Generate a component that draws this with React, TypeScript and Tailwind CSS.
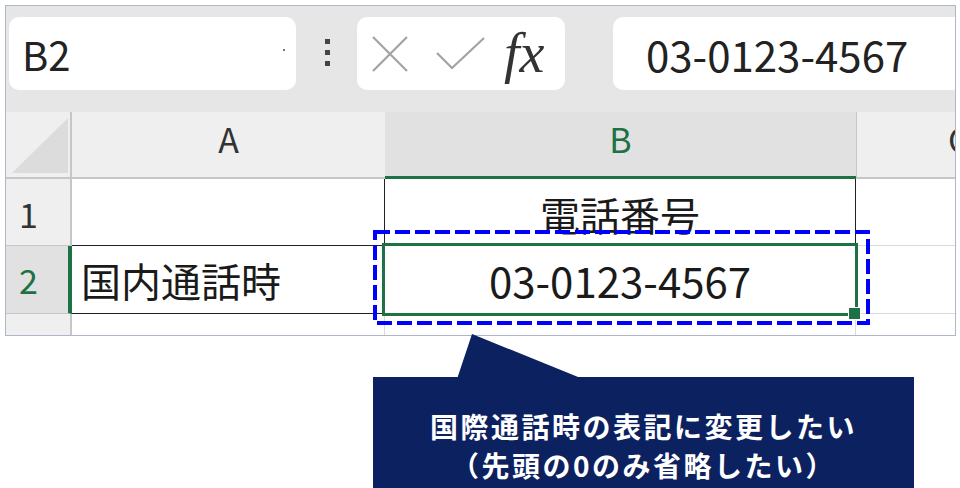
import React from "react";

const GREEN = "#1e7145";

function Toolbar() {
  return (
    <div className="h-[106px] shrink-0 flex items-start pt-[11px] pl-[3px]">
      {/* name box */}
      <div className="relative w-[287px] h-[73px] rounded-[10px] bg-white flex items-center pl-[13px] text-[40px] text-[#222]">
        B2
        <div className="absolute right-[11px] top-[32px] w-[2px] h-[2px] bg-[#777]" />
      </div>

      {/* grip dots */}
      <div className="ml-[29px] mt-[22px] flex flex-col gap-[6px]">
        <div className="w-[5px] h-[5px] bg-[#444]" />
        <div className="w-[5px] h-[5px] bg-[#444]" />
        <div className="w-[5px] h-[5px] bg-[#444]" />
      </div>

      {/* cancel / enter / fx */}
      <div className="ml-[27px] w-[208px] h-[73px] rounded-[10px] bg-white flex items-center pl-[15px]">
        <svg width="36" height="36" viewBox="0 0 36 36">
          <path d="M1 1 L35 35 M35 1 L1 35" stroke="#a3a3a3" strokeWidth="2.2" fill="none" />
        </svg>
        <svg className="ml-[28px]" width="50" height="34" viewBox="0 0 50 34">
          <path d="M1 16 L16 31 L48 1" stroke="#a3a3a3" strokeWidth="2.2" fill="none" />
        </svg>
        <span className="ml-[18px] font-['Liberation_Serif',serif] italic text-[56px] leading-none text-[#333] -mt-[2px]">
          fx
        </span>
      </div>

      {/* formula bar */}
      <div className="ml-[48px] flex-1 h-[73px] rounded-l-[10px] bg-white flex items-center pl-[33px] text-[42px] text-[#222]">
        03-0123-4567
      </div>
    </div>
  );
}

function Sheet() {
  return (
    <div className="relative flex-1 grid grid-cols-[66px_313px_471px_1fr] grid-rows-[67px_67px_68px_1fr] bg-white overflow-hidden">
      {/* header row */}
      <div className="relative bg-[#efefef] border-r-2 border-b-2 border-[#c6c6c6]">
        <svg className="absolute left-[6px] top-[6px]" width="56" height="55" viewBox="0 0 56 55">
          <polygon points="56,0 56,55 0,55" fill="#dcdcdc" />
        </svg>
      </div>
      <div className="bg-[#efefef] border-b-2 border-[#c6c6c6] flex items-start justify-center pt-[7px] text-[34px] leading-[40px] text-[#333]">
        A
      </div>
      <div className="bg-[#e1e1e1] border-b-[3px] border-[#1e7145] flex items-start justify-center pt-[7px] text-[34px] leading-[40px] text-[#1e7145]">
        B
      </div>
      <div className="bg-[#efefef] border-b-2 border-l border-[#c6c6c6] flex items-start pl-[91px] pt-[7px] text-[34px] leading-[40px] text-[#333] whitespace-nowrap">
        C
      </div>

      {/* row 1 */}
      <div className="bg-[#efefef] border-r-2 border-b border-[#c6c6c6] flex items-center pl-[13px] pt-[4px] text-[34px] leading-none text-[#333]">
        1
      </div>
      <div className="border-r border-b border-[#222]" />
      <div className="border-r border-[#222] flex items-center justify-center pt-[2px] text-[40px] text-[#1a1a1a]">
        電話番号
      </div>
      <div className="border-b border-[#dadada]" />

      {/* row 2 */}
      <div className="bg-[#e1e1e1] border-r-4 border-r-[#1e7145] border-b border-b-[#c6c6c6] flex items-center pl-[13px] text-[34px] leading-none text-[#1e7145]">
        2
      </div>
      <div className="border-b border-[#222] flex items-center pl-[9px] text-[40px] text-[#1a1a1a]">
        国内通話時
      </div>
      <div className="border-r border-b border-[#dadada] flex items-center justify-center text-[42px] text-[#1a1a1a]">
        03-0123-4567
      </div>
      <div className="border-b border-[#dadada]" />

      {/* row 3 */}
      <div className="bg-[#efefef] border-r-2 border-[#c6c6c6]" />
      <div className="border-r border-[#dadada]" />
      <div className="border-r border-[#dadada]" />
      <div />

      {/* active cell */}
      <div
        className="absolute left-[376px] top-[131px] w-[476px] h-[73px] border-[3px]"
        style={{ borderColor: GREEN }}
      />
      <div className="absolute left-[842px] top-[195px] w-[13px] h-[13px] bg-[#1e7145] border border-white" />

      {/* dashed highlight */}
      <svg className="absolute left-[367px] top-[118px]" width="497" height="95" viewBox="0 0 497 95">
        <rect x="2" y="2" width="493" height="91" fill="none" stroke="#0000ff" strokeWidth="4" strokeDasharray="15 5" />
      </svg>
    </div>
  );
}

export default function App() {
  return (
    <div className="relative w-[960px] h-[488px] bg-white overflow-hidden font-['Noto_Sans_CJK_JP',sans-serif]">
      <div className="pl-[5px] pt-[5px]">
        <div className="w-[951px] h-[331px] border border-[#aeb7c9] bg-[#e6e6e6] flex flex-col overflow-hidden">
          <Toolbar />
          <Sheet />
        </div>
      </div>

      {/* callout */}
      <svg className="absolute left-[455px] top-[330px]" width="130" height="49" viewBox="0 0 130 49">
        <polygon points="17,4 2,49 128,49" fill="#0c215f" />
      </svg>
      <div className="ml-[373px] mt-[41px] w-[541px] h-[120px] bg-[#0c215f] text-white font-bold text-[28px] tracking-[2.5px] leading-[39px] flex flex-col items-center pt-[30px]">
        <div>国際通話時の表記に変更したい</div>
        <div>（先頭の0のみ省略したい）</div>
      </div>
    </div>
  );
}
